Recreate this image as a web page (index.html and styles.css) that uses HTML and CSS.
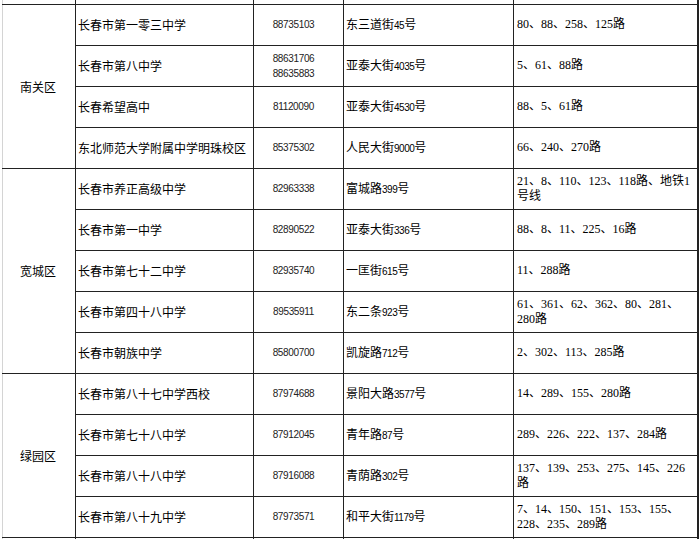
FILE: index.html
```html
<!DOCTYPE html>
<html lang="zh-CN">
<head>
<meta charset="utf-8">
<title>长春市高中学校信息</title>
<link rel="stylesheet" href="styles.css">
</head>
<body>
<table class="sheet">
  <colgroup>
    <col class="c-dist"><col class="c-name"><col class="c-tel"><col class="c-addr"><col class="c-bus">
  </colgroup>
  <tbody>
    <tr class="cut cut-top"><td class="dist"></td><td></td><td></td><td></td><td class="bus"></td></tr>

    <tr><td class="dist" rowspan="4">南关区</td><td class="name">长春市第一零三中学</td><td class="tel">88735103</td><td class="addr">东三道街<span class="n">45</span>号</td><td class="bus">80、88、258、125路</td></tr>
    <tr><td class="name">长春市第八中学</td><td class="tel">88631706<br>88635883</td><td class="addr">亚泰大街<span class="n">4035</span>号</td><td class="bus">5、61、88路</td></tr>
    <tr><td class="name">长春希望高中</td><td class="tel">81120090</td><td class="addr">亚泰大街<span class="n">4530</span>号</td><td class="bus">88、5、61路</td></tr>
    <tr><td class="name">东北师范大学附属中学明珠校区</td><td class="tel">85375302</td><td class="addr">人民大街<span class="n">9000</span>号</td><td class="bus">66、240、270路</td></tr>

    <tr><td class="dist" rowspan="5">宽城区</td><td class="name">长春市养正高级中学</td><td class="tel">82963338</td><td class="addr">富城路<span class="n">399</span>号</td><td class="bus">21、8、110、123、118路、地铁1号线</td></tr>
    <tr><td class="name">长春市第一中学</td><td class="tel">82890522</td><td class="addr">亚泰大街<span class="n">336</span>号</td><td class="bus">88、8、11、225、16路</td></tr>
    <tr><td class="name">长春市第七十二中学</td><td class="tel">82935740</td><td class="addr">一匡街<span class="n">615</span>号</td><td class="bus">11、288路</td></tr>
    <tr><td class="name">长春市第四十八中学</td><td class="tel">89535911</td><td class="addr">东二条<span class="n">923</span>号</td><td class="bus">61、361、62、362、80、281、280路</td></tr>
    <tr><td class="name">长春市朝族中学</td><td class="tel">85800700</td><td class="addr">凯旋路<span class="n">712</span>号</td><td class="bus">2、302、113、285路</td></tr>

    <tr><td class="dist" rowspan="4">绿园区</td><td class="name">长春市第八十七中学西校</td><td class="tel">87974688</td><td class="addr">景阳大路<span class="n">3577</span>号</td><td class="bus">14、289、155、280路</td></tr>
    <tr><td class="name">长春市第七十八中学</td><td class="tel">87912045</td><td class="addr">青年路<span class="n">87</span>号</td><td class="bus">289、226、222、137、284路</td></tr>
    <tr><td class="name">长春市第八十八中学</td><td class="tel">87916088</td><td class="addr">青荫路<span class="n">302</span>号</td><td class="bus">137、139、253、275、145、226路</td></tr>
    <tr><td class="name">长春市第八十九中学</td><td class="tel">87973571</td><td class="addr">和平大街<span class="n">1179</span>号</td><td class="bus">7、14、150、151、153、155、228、235、289路</td></tr>

    <tr class="cut cut-bottom"><td class="dist"></td><td></td><td></td><td></td><td class="bus"></td></tr>
  </tbody>
</table>
</body>
</html>
```
FILE: styles.css
```css
html, body {
  margin: 0;
  padding: 0;
  background: #ffffff;
}
body {
  width: 700px;
  height: 539px;
  overflow: hidden;
  font-family: "Noto Sans CJK SC", "Noto Sans", sans-serif;
  font-size: 12px;
  color: #000000;
}
.sheet {
  border-collapse: collapse;
  table-layout: fixed;
  width: 696px;
  margin-left: 2px;
}
.c-dist { width: 73px; }
.c-name { width: 178px; }
.c-tel  { width: 90px; }
.c-addr { width: 170px; }
.c-bus  { width: 184px; }

.sheet td {
  border: 1px solid #222222;
  padding: 0 2px;
  vertical-align: middle;
  line-height: 15px;
  overflow: hidden;
}
.sheet tr {
  height: 41px;
}
.sheet tr.cut-top {
  height: 4px;
}
.sheet tr.cut-top td {
  border-top: none;
  padding: 0;
  line-height: 0;
}
.sheet tr.cut-bottom {
  height: 20px;
}
.sheet td.dist {
  border-left: 1px solid #d4d4d4;
  text-align: center;
  padding-right: 4px;
}
.sheet td.name {
  padding-left: 2px;
}
.sheet td.tel {
  text-align: center;
  padding-right: 12px;
  font-family: "Liberation Sans", sans-serif;
  font-size: 10px;
  letter-spacing: -0.35px;
  color: #222222;
}
.sheet td.addr {
  padding-left: 2px;
}
.n {
  font-family: "Liberation Sans", sans-serif;
  font-size: 10px;
  letter-spacing: -0.5px;
}
.sheet td.bus {
  padding: 0 3px;
  font-family: "Liberation Serif", "Noto Sans CJK SC", serif;
  border-right: 2px solid #222222;
}
```
